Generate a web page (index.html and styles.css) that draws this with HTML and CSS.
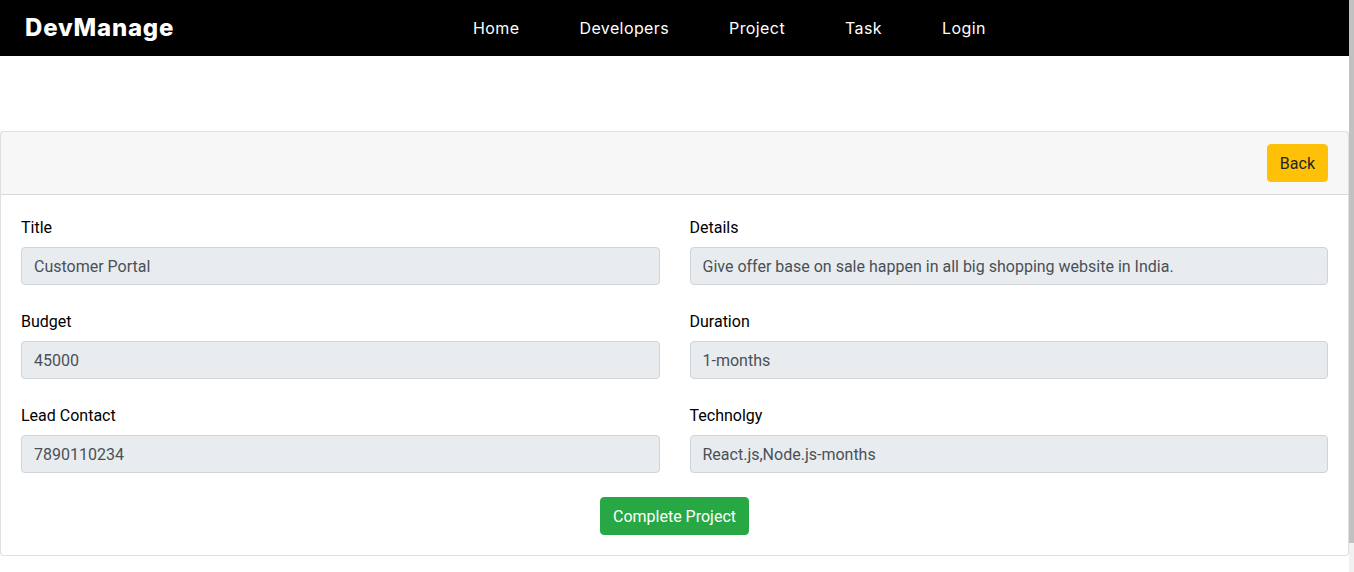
FILE: index.html
```html
<!DOCTYPE html>
<html lang="en">
<head>
<meta charset="utf-8">
<title>DevManage</title>
<link rel="stylesheet" href="styles.css">
</head>
<body>
<div class="app">
  <header class="navbar">
    <div class="brand">DevManage</div>
    <nav class="nav-links">
      <a href="#">Home</a>
      <a href="#">Developers</a>
      <a href="#">Project</a>
      <a href="#">Task</a>
      <a href="#">Login</a>
    </nav>
  </header>
  <main class="page">
    <section class="card">
      <div class="card-header">
        <button class="btn btn-warning">Back</button>
      </div>
      <div class="card-body">
        <div class="row">
          <div class="col">
            <div class="form-group">
              <label>Title</label>
              <input class="form-control" value="Customer Portal" readonly>
            </div>
            <div class="form-group">
              <label>Budget</label>
              <input class="form-control" value="45000" readonly>
            </div>
            <div class="form-group">
              <label>Lead Contact</label>
              <input class="form-control" value="7890110234" readonly>
            </div>
          </div>
          <div class="col">
            <div class="form-group">
              <label>Details</label>
              <input class="form-control" value="Give offer base on sale happen in all big shopping website in India." readonly>
            </div>
            <div class="form-group">
              <label>Duration</label>
              <input class="form-control" value="1-months" readonly>
            </div>
            <div class="form-group">
              <label>Technolgy</label>
              <input class="form-control" value="React.js,Node.js-months" readonly>
            </div>
          </div>
        </div>
        <div class="actions">
          <button class="btn btn-success">Complete Project</button>
        </div>
      </div>
    </section>
  </main>
</div>
<div class="scrollbar"><div class="scrollbar-thumb"></div></div>
</body>
</html>
```

FILE: styles.css
```css
* { box-sizing: border-box; }

html, body {
  margin: 0;
  padding: 0;
}

body {
  font-family: Roboto, "Liberation Sans", Arial, sans-serif;
  font-size: 16px;
  line-height: 1.5;
  color: #000;
  background: #fff;
}

.app {
  margin-right: 5px;
}

.scrollbar {
  position: fixed;
  top: 0;
  right: 0;
  bottom: 0;
  width: 5px;
  background: #f1f1f1;
}

.scrollbar-thumb {
  height: 543px;
  background: #c1c1c1;
}

.navbar {
  background: #000;
  height: 56px;
  display: flex;
  align-items: center;
  padding: 0 25px;
}

.brand {
  font-family: Inter, "Open Sans", sans-serif;
  font-weight: 800;
  font-size: 24px;
  letter-spacing: 0.8px;
  color: #fff;
  width: 149px;
  white-space: nowrap;
}

.nav-links {
  display: flex;
  gap: 60px;
  margin-left: 299px;
}

.nav-links a {
  font-family: Inter, "Open Sans", sans-serif;
  font-size: 16px;
  letter-spacing: 0.4px;
  color: #fff;
  text-decoration: none;
}

.page {
  padding-top: 75px;
  padding-bottom: 44px;
}

.card {
  border: 1px solid rgba(0, 0, 0, 0.125);
  border-radius: 4px;
  background: #fff;
}

.card-header {
  background: rgba(0, 0, 0, 0.03);
  border-bottom: 1px solid rgba(0, 0, 0, 0.125);
  padding: 12px 20px;
  display: flex;
  justify-content: flex-end;
}

.card-body {
  padding: 20px;
}

.row {
  display: flex;
  gap: 30px;
}

.col {
  flex: 1 1 0;
  min-width: 0;
}

.form-group {
  margin-bottom: 24px;
}

.form-group label {
  display: block;
  padding-top: 1px;
  margin-bottom: 7px;
}

.form-control {
  display: block;
  width: 100%;
  height: 38px;
  padding: 6px 12px;
  font-family: inherit;
  font-size: 16px;
  line-height: 1.5;
  color: #495057;
  background: #e9ecef;
  border: 1px solid #ced4da;
  border-radius: 4px;
  outline: none;
}

.actions {
  text-align: center;
}

.btn {
  display: inline-block;
  font-family: inherit;
  font-size: 16px;
  line-height: 1.5;
  padding: 7px 12px 5px;
  border: 1px solid transparent;
  border-radius: 4px;
  cursor: pointer;
}

.btn-warning {
  background: #ffc107;
  border-color: #ffc107;
  color: #212529;
}

.btn-success {
  background: #28a745;
  border-color: #28a745;
  color: #fff;
}
```
